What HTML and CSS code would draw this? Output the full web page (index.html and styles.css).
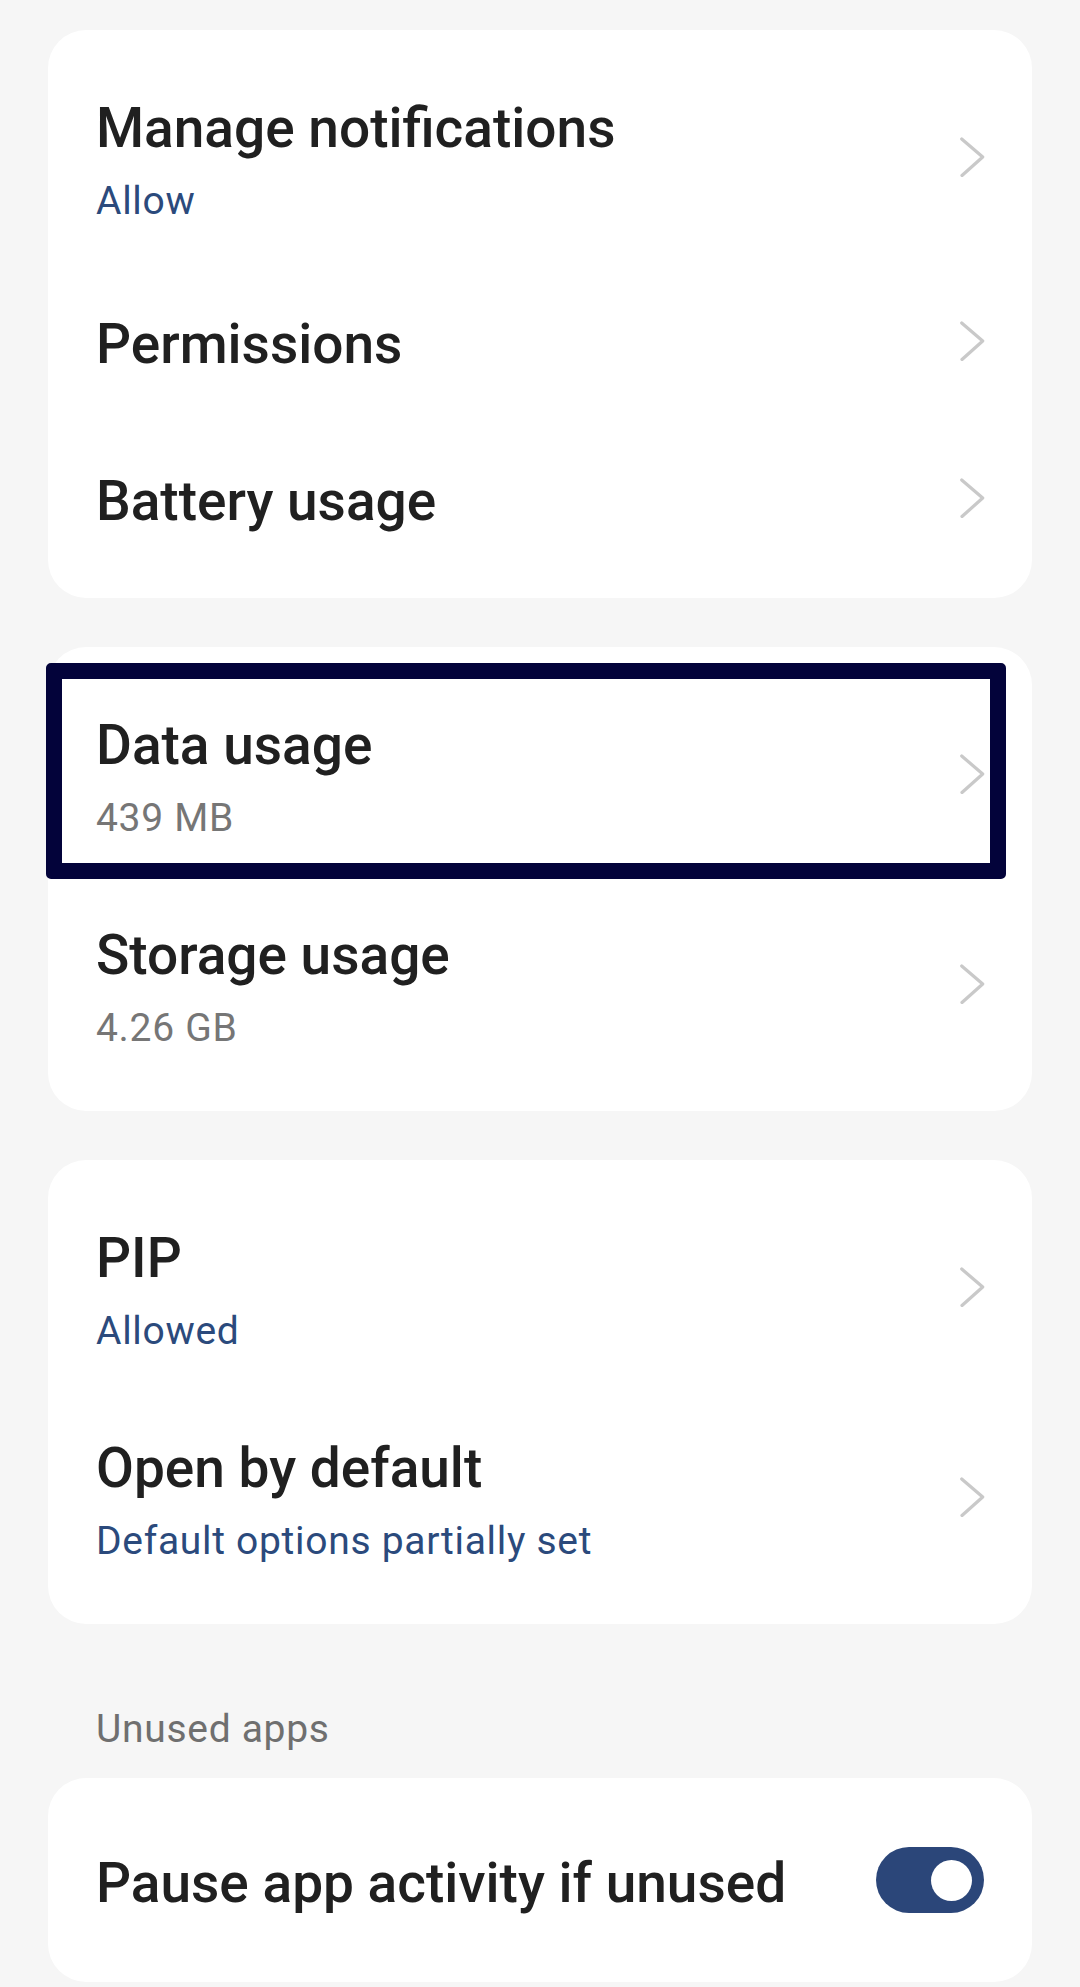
FILE: index.html
```html
<!DOCTYPE html>
<html lang="en">
<head>
<meta charset="utf-8">
<title>App info</title>
<link rel="stylesheet" href="styles.css">
</head>
<body>
<div class="page">
  <section class="card">
    <div class="row two">
      <div class="text"><div class="title">Manage notifications</div><div class="sub blue">Allow</div></div>
      <svg class="chev" viewBox="0 0 26 40" width="26" height="40"><path d="M2.7 2 L23.7 20 L3 38.5"/></svg>
    </div>
    <div class="row one">
      <div class="text"><div class="title">Permissions</div></div>
      <svg class="chev" viewBox="0 0 26 40" width="26" height="40"><path d="M2.7 2 L23.7 20 L3 38.5"/></svg>
    </div>
    <div class="row one">
      <div class="text"><div class="title">Battery usage</div></div>
      <svg class="chev" viewBox="0 0 26 40" width="26" height="40"><path d="M2.7 2 L23.7 20 L3 38.5"/></svg>
    </div>
  </section>

  <section class="card">
    <div class="row two focused">
      <div class="text"><div class="title">Data usage</div><div class="sub gray">439 MB</div></div>
      <svg class="chev" viewBox="0 0 26 40" width="26" height="40"><path d="M2.7 2 L23.7 20 L3 38.5"/></svg>
      <span class="focus-ring"></span>
    </div>
    <div class="row two">
      <div class="text"><div class="title">Storage usage</div><div class="sub gray">4.26 GB</div></div>
      <svg class="chev" viewBox="0 0 26 40" width="26" height="40"><path d="M2.7 2 L23.7 20 L3 38.5"/></svg>
    </div>
  </section>

  <section class="card">
    <div class="row two">
      <div class="text"><div class="title">PIP</div><div class="sub blue">Allowed</div></div>
      <svg class="chev" viewBox="0 0 26 40" width="26" height="40"><path d="M2.7 2 L23.7 20 L3 38.5"/></svg>
    </div>
    <div class="row two">
      <div class="text"><div class="title">Open by default</div><div class="sub blue">Default options partially set</div></div>
      <svg class="chev" viewBox="0 0 26 40" width="26" height="40"><path d="M2.7 2 L23.7 20 L3 38.5"/></svg>
    </div>
  </section>

  <div class="header">Unused apps</div>

  <section class="card">
    <div class="row toggle-row">
      <div class="text"><div class="title">Pause app activity if unused</div></div>
      <span class="toggle"><span class="knob"></span></span>
    </div>
  </section>
</div>
</body>
</html>
```

FILE: styles.css
```css
html, body {
  margin: 0;
  padding: 0;
  background: #f6f6f6;
}

body {
  font-family: Roboto, "Noto Sans", "Liberation Sans", sans-serif;
  color: #202020;
  height: 1987px;
  overflow: hidden;
}

.page {
  padding: 30px 48px 0 48px;
}

.card {
  background: #ffffff;
  border-radius: 38px;
  padding: 22px 0;
  margin-bottom: 49px;
}

.row {
  position: relative;
  display: flex;
  align-items: center;
  justify-content: space-between;
  padding: 0 47px 0 48px;
}

.row.two { height: 210px; }
.row.one { height: 157px; }
.row.toggle-row { height: 160px; padding-right: 48px; }

.text {
  display: flex;
  flex-direction: column;
  padding-top: 6px;
}

.title {
  font-size: 55px;
  line-height: 64px;
  font-weight: 500;
  color: #202020;
}

.sub {
  font-size: 39px;
  line-height: 46px;
  letter-spacing: 0.7px;
  margin-top: 18px;
  font-weight: 400;
}

.sub.blue { color: #2b4a7c; }
.sub.gray { color: #767676; }

.chev {
  flex: none;
  display: block;
}

.chev path {
  fill: none;
  stroke: #c9c9c9;
  stroke-width: 3.2;
  stroke-linecap: round;
  stroke-linejoin: round;
}

.focus-ring {
  position: absolute;
  left: -2px;
  top: -6px;
  right: 26px;
  bottom: 0;
  border: 16px solid #03033a;
  border-radius: 5px;
  pointer-events: none;
}

.header {
  font-size: 39px;
  line-height: 44px;
  letter-spacing: 0.7px;
  color: #6f6f6f;
  padding: 34px 48px 27px 48px;
}

.header + .card { margin-bottom: 0; }

.toggle {
  flex: none;
  width: 108px;
  height: 66px;
  border-radius: 33px;
  background: #2b4679;
  display: flex;
  align-items: center;
  justify-content: flex-end;
  padding-right: 12px;
  box-sizing: border-box;
}

.knob {
  width: 41px;
  height: 41px;
  border-radius: 50%;
  background: #ffffff;
}
```
